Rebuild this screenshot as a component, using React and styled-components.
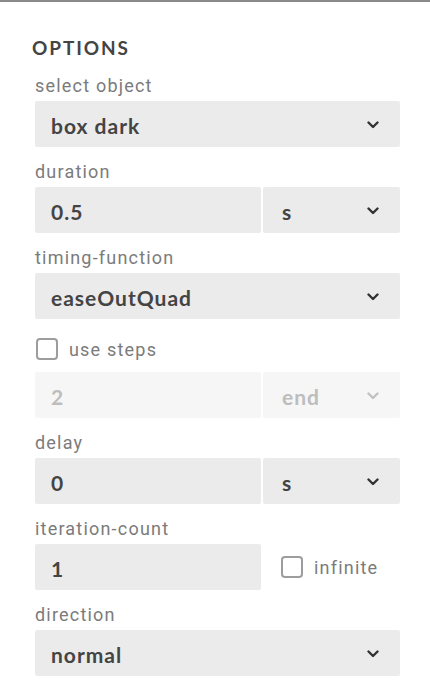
import React from 'react'
import styled, { createGlobalStyle } from 'styled-components'

const Global = createGlobalStyle`
  html, body { margin: 0; padding: 0; background: #fff; }
  body { font-family: Roboto, "Liberation Sans", sans-serif; }
`

const Panel = styled.div`
  width: 430px;
  height: 680px;
  box-sizing: border-box;
  border-top: 2px solid #8a8a8a;
  padding: 34px 30px 0 35px;
  overflow: hidden;
`

const Heading = styled.h2`
  margin: 0 0 15px -3px;
  font-family: Lato, "Liberation Sans", sans-serif;
  font-weight: 700;
  font-size: 19px;
  line-height: 24px;
  letter-spacing: 1.9px;
  color: #444;
`

const Field = styled.div`
  margin-top: ${p => (p.$first ? 0 : 14)}px;
`

const Label = styled.div`
  font-size: 18px;
  line-height: 22px;
  letter-spacing: 1.2px;
  color: #7b7b7b;
  margin-bottom: 4px;
`

const Row = styled.div`
  display: grid;
  grid-template-columns: 226px 1fr;
  gap: 2px;
  align-items: center;
`

const Box = styled.div`
  height: 46px;
  box-sizing: border-box;
  display: flex;
  align-items: center;
  justify-content: space-between;
  padding: 2px 21px 0 ${p => p.$pad || 16}px;
  background: ${p => (p.$disabled ? '#f6f6f6' : '#ebebeb')};
  color: ${p => (p.$disabled ? '#bdbdbd' : '#444')};
  border-radius: 2px;
  font-family: Lato, "Liberation Sans", sans-serif;
  font-weight: 700;
  font-size: 21px;
  letter-spacing: 1px;
`

const CheckRow = styled.label`
  display: flex;
  align-items: center;
  gap: 11px;
  height: 22px;
  margin: ${p => p.$margin || '0'};
  font-size: 18px;
  letter-spacing: 1.2px;
  color: #7b7b7b;
`

const Check = styled.span`
  width: 22px;
  height: 22px;
  box-sizing: border-box;
  border: 2px solid #9d9d9d;
  border-radius: 4px;
  background: #fff;
  flex: none;
  margin-left: ${p => p.$offset || 1}px;
`

function Chevron({ faded }) {
  return (
    <svg width="12" height="8" viewBox="0 0 12 8">
      <path
        d="M1.5 1.5 L6 6 L10.5 1.5"
        fill="none"
        stroke={faded ? '#c2c2c2' : '#333'}
        strokeWidth="2.4"
        strokeLinecap="round"
        strokeLinejoin="round"
      />
    </svg>
  )
}

function Select({ value, pad, disabled }) {
  return (
    <Box $pad={pad} $disabled={disabled}>
      <span>{value}</span>
      <Chevron faded={disabled} />
    </Box>
  )
}

export default function App() {
  return (
    <>
      <Global />
      <Panel>
        <Heading>OPTIONS</Heading>

        <Field $first>
          <Label>select object</Label>
          <Select value="box dark" />
        </Field>

        <Field>
          <Label>duration</Label>
          <Row>
            <Box>0.5</Box>
            <Select value="s" pad={19} />
          </Row>
        </Field>

        <Field>
          <Label>timing-function</Label>
          <Select value="easeOutQuad" />
        </Field>

        <CheckRow $margin="19px 0 12px">
          <Check />
          use steps
        </CheckRow>
        <Row>
          <Box $disabled>2</Box>
          <Select value="end" pad={19} disabled />
        </Row>

        <Field>
          <Label>delay</Label>
          <Row>
            <Box>0</Box>
            <Select value="s" pad={19} />
          </Row>
        </Field>

        <Field>
          <Label>iteration-count</Label>
          <Row>
            <Box>1</Box>
            <CheckRow>
              <Check $offset={18} />
              infinite
            </CheckRow>
          </Row>
        </Field>

        <Field>
          <Label>direction</Label>
          <Select value="normal" />
        </Field>
      </Panel>
    </>
  )
}
